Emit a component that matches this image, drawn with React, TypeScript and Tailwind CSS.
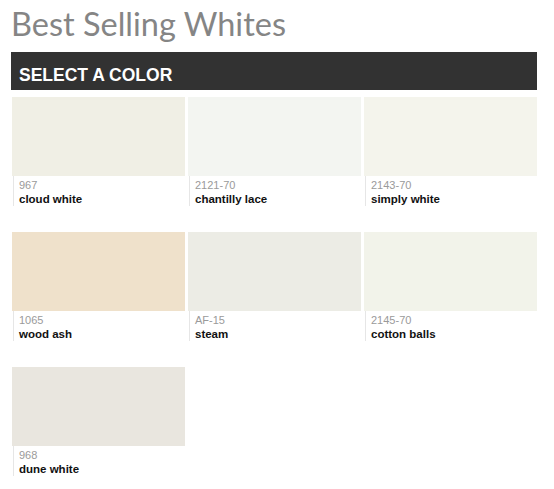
const colors = [
  { code: "967", name: "cloud white", hex: "#f0efe5" },
  { code: "2121-70", name: "chantilly lace", hex: "#f3f5f1" },
  { code: "2143-70", name: "simply white", hex: "#f4f4ec" },
  { code: "1065", name: "wood ash", hex: "#efe1cb" },
  { code: "AF-15", name: "steam", hex: "#ecece5" },
  { code: "2145-70", name: "cotton balls", hex: "#f2f3ea" },
  { code: "968", name: "dune white", hex: "#e9e6df" },
];

function Swatch({ code, name, hex }: { code: string; name: string; hex: string }) {
  return (
    <div className="flex flex-col">
      <div className="h-[79px] w-full" style={{ backgroundColor: hex }} />
      <div className="ml-[1px] h-[30px] border-l border-[#e6e6e6] pl-[5px] pt-[3px]">
        <div className="text-[11px] leading-[13px] text-[#9a9a9a]">{code}</div>
        <div className="text-[11.5px] font-bold leading-[14px] text-[#111]">{name}</div>
      </div>
    </div>
  );
}

export default function App() {
  return (
    <div
      className="h-[489px] w-[554px] bg-white pl-[11px] pr-[17px]"
      style={{ fontFamily: '"Liberation Sans", Arial, sans-serif' }}
    >
      {/* Title */}
      <h1
        className="pt-[3px] text-[32.5px] leading-[41px] text-[#858585]"
        style={{ fontFamily: "Lato, sans-serif" }}
      >
        Best Selling Whites
      </h1>

      {/* Header bar */}
      <div className="mt-[8px] h-[38px] bg-[#323232] pl-[8px] pt-[13px] text-[17.5px] font-bold leading-[20px] text-white">
        SELECT A COLOR
      </div>

      {/* Grid */}
      <div className="mt-[7px] grid grid-cols-3 gap-x-[3px] gap-y-[26px] pl-[1px]">
        {colors.map((c) => (
          <Swatch key={c.code} {...c} />
        ))}
      </div>
    </div>
  );
}
